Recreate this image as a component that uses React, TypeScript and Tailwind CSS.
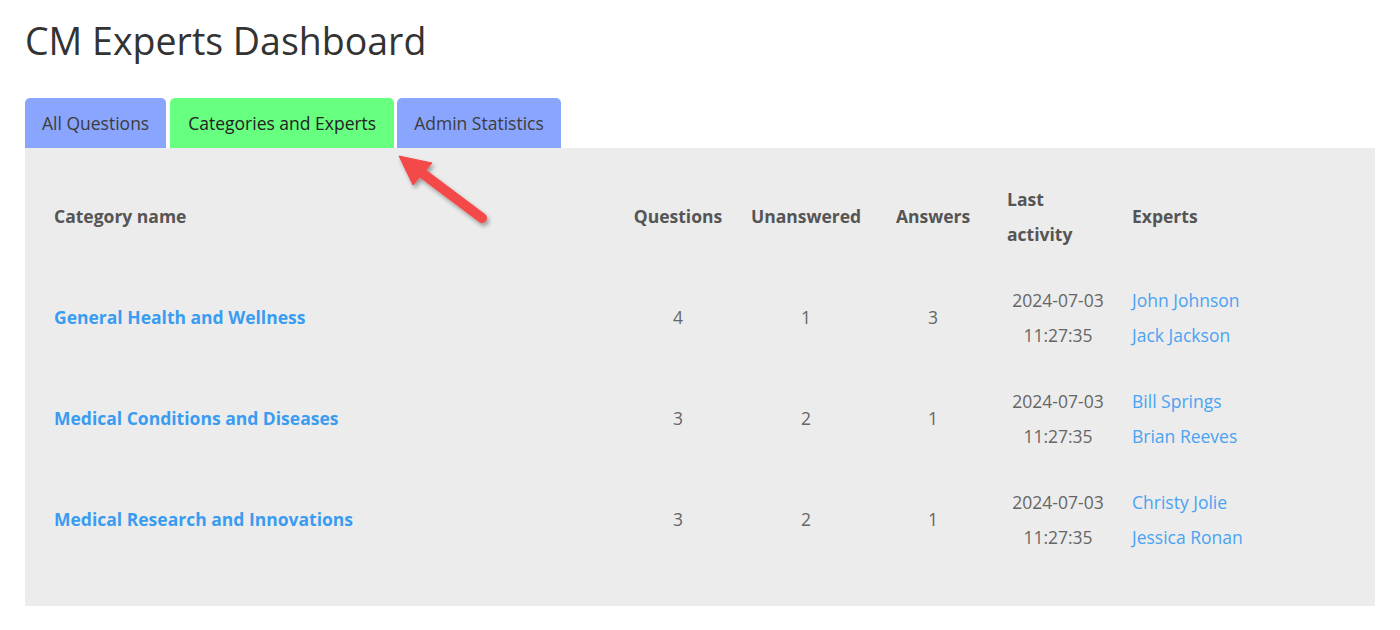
import React from 'react';

type Row = {
  name: string;
  questions: number;
  unanswered: number;
  answers: number;
  date: string;
  time: string;
  experts: string[];
};

const rows: Row[] = [
  { name: 'General Health and Wellness', questions: 4, unanswered: 1, answers: 3, date: '2024-07-03', time: '11:27:35', experts: ['John Johnson', 'Jack Jackson'] },
  { name: 'Medical Conditions and Diseases', questions: 3, unanswered: 2, answers: 1, date: '2024-07-03', time: '11:27:35', experts: ['Bill Springs', 'Brian Reeves'] },
  { name: 'Medical Research and Innovations', questions: 3, unanswered: 2, answers: 1, date: '2024-07-03', time: '11:27:35', experts: ['Christy Jolie', 'Jessica Ronan'] },
];

const cols = 'grid grid-cols-[565px_118px_138px_116px_134px_1fr] items-center h-[101px]';

function Arrow() {
  return (
    <svg className="absolute left-[390px] top-[145px]" width="110" height="90" viewBox="0 0 110 90">
      <defs>
        <filter id="sh" x="-30%" y="-30%" width="160%" height="160%">
          <feDropShadow dx="2" dy="3" stdDeviation="2" floodColor="#000" floodOpacity="0.35" />
        </filter>
      </defs>
      <g filter="url(#sh)" fill="#f44848" stroke="#f44848">
        <line x1="28" y1="25" x2="92" y2="73" strokeWidth="10" strokeLinecap="round" />
        <polygon points="9,11 42,18 23,40" strokeWidth="1" strokeLinejoin="round" />
      </g>
    </svg>
  );
}

export default function App() {
  return (
    <div className="relative min-h-screen bg-white px-[25px] font-['Open_Sans',sans-serif]">
      <h1 className="pt-[15px] text-[37.5px] leading-[52px] text-[#333]">CM Experts Dashboard</h1>

      <div className="mt-[31px] flex items-end text-[17.5px]">
        <div className="flex h-[50px] items-center rounded-t-[5px] bg-[#8aa5fe] px-[17px] text-[#3c3c3c]">All Questions</div>
        <div className="ml-[4px] flex h-[50px] items-center rounded-t-[5px] bg-[#66ff7f] px-[18px] text-[#222]">Categories and Experts</div>
        <div className="ml-[3px] flex h-[50px] items-center rounded-t-[5px] bg-[#8aa5fe] px-[17px] text-[#3c3c3c]">Admin Statistics</div>
      </div>

      <div className="bg-[#ececec] pl-[29px] pr-[20px] pt-[18px] pb-[36px] text-[17.5px] leading-[35px]">
        <div className={`${cols} font-bold text-[#555]`}>
          <div>Category name</div>
          <div className="text-center">Questions</div>
          <div className="text-center">Unanswered</div>
          <div className="text-center">Answers</div>
          <div className="pl-[16px]">Last<br />activity</div>
          <div className="pl-[7px]">Experts</div>
        </div>
        {rows.map((r) => (
          <div key={r.name} className={`${cols} text-[#666]`}>
            <a className="font-bold text-[#3a9cf0]">{r.name}</a>
            <div className="text-center">{r.questions}</div>
            <div className="text-center">{r.unanswered}</div>
            <div className="text-center">{r.answers}</div>
            <div className="text-center">{r.date}<br />{r.time}</div>
            <div className="pl-[7px] text-[#4aa3f2]">
              {r.experts.map((e) => (
                <div key={e}>{e}</div>
              ))}
            </div>
          </div>
        ))}
      </div>
      <Arrow />
    </div>
  );
}
